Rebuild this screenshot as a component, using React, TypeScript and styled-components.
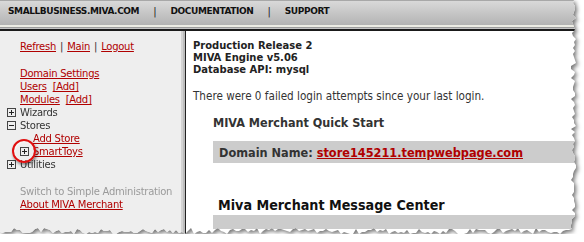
import React from "react";
import styled, { createGlobalStyle } from "styled-components";

const GlobalStyle = createGlobalStyle`
  html, body {
    margin: 0;
    padding: 0;
    background: #ffffff;
  }
`;

const SHOT_W = 576;
const SHOT_H = 234;

// torn paper edge, generated once with a fixed seed so it stays the same
const tornEdge = (() => {
  let seed = 7;
  const rnd = () => {
    seed = (seed * 9301 + 49297) % 233280;
    return seed / 233280;
  };
  const pts: string[] = ["0px 0px"];
  for (let y = 0; y <= SHOT_H - 6; y += 3) {
    pts.push(`${SHOT_W - Math.round(rnd() * 5)}px ${y}px`);
  }
  for (let x = SHOT_W - 4; x >= 0; x -= 3) {
    pts.push(`${x}px ${SHOT_H - Math.round(rnd() * 6)}px`);
  }
  pts.push(`0px ${SHOT_H - 3}px`);
  return `polygon(${pts.join(", ")})`;
})();

const Shadow = styled.div`
  position: relative;
  width: ${SHOT_W}px;
  height: ${SHOT_H}px;
  filter: drop-shadow(2px 2px 2px rgba(0, 0, 0, 0.55));
`;

const Frame = styled.div`
  width: 100%;
  height: 100%;
  background: #ffffff;
  display: flex;
  flex-direction: column;
  clip-path: ${tornEdge};
`;

const TopNav = styled.div`
  height: 25px;
  display: flex;
  align-items: flex-start;
  padding: 4px 0 0 8px;
  box-sizing: border-box;
  background: linear-gradient(#d9d9d9, #b3b3b3);
  border-top: 1px solid #a8a8a8;
`;

const NavItem = styled.span`
  font-family: "DejaVu Sans", Verdana, sans-serif;
  font-weight: bold;
  font-size: 9px;
  letter-spacing: -0.4px;
  line-height: 13px;
  color: #111;
`;

const NavSep = styled.span`
  font-family: "DejaVu Sans", Verdana, sans-serif;
  font-size: 10px;
  line-height: 13px;
  color: #222;
  margin: 0 14px;
`;

const NavRule = styled.div`
  height: 6px;
  background: linear-gradient(
    #ecece4 0px,
    #ecece4 2px,
    #9c9c9c 2px,
    #9c9c9c 3px,
    #c4c4c4 3px,
    #c4c4c4 4px,
    #1a1a1a 4px,
    #1a1a1a 6px
  );
`;

const Body = styled.div`
  flex: 1;
  display: flex;
  min-height: 0;
`;

const Sidebar = styled.div`
  position: relative;
  width: 181px;
  background: #eeeeee;
  padding: 9px 0 0 7px;
  box-sizing: border-box;
  font-family: "DejaVu Sans", Verdana, sans-serif;
  font-size: 10px;
  letter-spacing: -0.25px;
  line-height: 13px;
  color: #333;
`;

const Divider = styled.div`
  width: 4px;
  background: linear-gradient(90deg, #d4d4d4 0, #d4d4d4 2px, #bdbdbd 2px);
  border-right: 1px solid #222;
`;

const Row = styled.div<{ $level?: number; $gap?: number; $muted?: boolean }>`
  display: flex;
  align-items: center;
  height: 13px;
  padding-left: ${(p) => (p.$level || 0) * 13}px;
  margin-bottom: ${(p) => p.$gap || 0}px;
  color: ${(p) => (p.$muted ? "#9a9a9a" : "#333")};
  white-space: nowrap;
`;

const IconSlot = styled.span`
  width: 13px;
  flex: none;
  display: flex;
  align-items: center;
`;

const Link = styled.a`
  color: #b00000;
  text-decoration: underline;
  cursor: pointer;
`;

const Pipe = styled.span`
  margin: 0 4px;
  color: #333;
`;

const Toggle = ({ open }: { open?: boolean }) => (
  <svg width="9" height="9" viewBox="0 0 9 9">
    <rect x="0.5" y="0.5" width="8" height="8" fill="none" stroke="#444" />
    <line x1="2" y1="4.5" x2="7" y2="4.5" stroke="#222" />
    {!open && <line x1="4.5" y1="2" x2="4.5" y2="7" stroke="#222" />}
  </svg>
);

const Ring = styled.div`
  position: absolute;
  left: 12px;
  top: 108px;
  width: 20px;
  height: 20px;
  border: 2px solid #e01010;
  border-radius: 50%;
  box-shadow: 1px 2px 3px rgba(0, 0, 0, 0.45), inset 1px 1px 2px rgba(255, 255, 255, 0.7);
`;

const Content = styled.div`
  flex: 1;
  padding: 9px 0 0 7px;
  font-family: Tahoma, "DejaVu Sans Condensed", "DejaVu Sans", sans-serif;
  color: #222;
`;

const Info = styled.div`
  font-size: 11.1px;
  font-weight: bold;
  line-height: 12px;
  margin-bottom: 14px;
`;

const Notice = styled.div`
  font-size: 11.6px;
  line-height: 12px;
  color: #333;
  margin-bottom: 12px;
`;

const Section = styled.div`
  margin-left: 20px;
`;

const SectionTitle = styled.div<{ $size: number; $indent?: number }>`
  font-size: ${(p) => p.$size}px;
  font-weight: bold;
  line-height: 18px;
  padding-left: ${(p) => p.$indent || 0}px;
  color: ${(p) => (p.$size > 13 ? "#111" : "#333")};
`;

const Spacer = styled.div<{ $h: number }>`
  height: ${(p) => p.$h}px;
`;

const GreyBar = styled.div<{ $height: number }>`
  background: #cccccc;
  height: ${(p) => p.$height}px;
  display: flex;
  align-items: center;
  padding-left: 6px;
  font-size: 12.6px;
  font-weight: bold;
  color: #333;
  white-space: nowrap;
`;

const DomainLink = styled(Link)`
  margin-left: 4px;
`;

export default function App() {
  return (
    <>
      <GlobalStyle />
      <Shadow>
        <Frame>
          <TopNav>
            <NavItem>SMALLBUSINESS.MIVA.COM</NavItem>
            <NavSep>|</NavSep>
            <NavItem>DOCUMENTATION</NavItem>
            <NavSep>|</NavSep>
            <NavItem>SUPPORT</NavItem>
          </TopNav>
          <NavRule />
          <Body>
            <Sidebar>
              <Row $gap={14}>
                <IconSlot />
                <Link>Refresh</Link>
                <Pipe>|</Pipe>
                <Link>Main</Link>
                <Pipe>|</Pipe>
                <Link>Logout</Link>
              </Row>
              <Row>
                <IconSlot />
                <Link>Domain Settings</Link>
              </Row>
              <Row>
                <IconSlot />
                <Link>Users</Link>&nbsp;&nbsp;<Link>[Add]</Link>
              </Row>
              <Row>
                <IconSlot />
                <Link>Modules</Link>&nbsp;&nbsp;<Link>[Add]</Link>
              </Row>
              <Row>
                <IconSlot>
                  <Toggle />
                </IconSlot>
                Wizards
              </Row>
              <Row>
                <IconSlot>
                  <Toggle open />
                </IconSlot>
                Stores
              </Row>
              <Row $level={1}>
                <IconSlot />
                <Link>Add Store</Link>
              </Row>
              <Row $level={1}>
                <IconSlot>
                  <Toggle />
                </IconSlot>
                <Link>SmartToys</Link>
              </Row>
              <Row $gap={14}>
                <IconSlot>
                  <Toggle />
                </IconSlot>
                Utilities
              </Row>
              <Row $muted>
                <IconSlot />
                Switch to Simple Administration
              </Row>
              <Row>
                <IconSlot />
                <Link>About MIVA Merchant</Link>
              </Row>
              <Ring />
            </Sidebar>
            <Divider />
            <Content>
              <Info>
                Production Release 2
                <br />
                MIVA Engine v5.06
                <br />
                Database API: mysql
              </Info>
              <Notice>There were 0 failed login attempts since your last login.</Notice>
              <Section>
                <SectionTitle $size={12.5}>MIVA Merchant Quick Start</SectionTitle>
                <Spacer $h={9} />
                <GreyBar $height={22}>
                  Domain Name:
                  <DomainLink>store145211.tempwebpage.com</DomainLink>
                </GreyBar>
                <Spacer $h={33} />
                <SectionTitle $size={14.2} $indent={5}>
                  Miva Merchant Message Center
                </SectionTitle>
                <Spacer $h={1} />
                <GreyBar $height={14} />
              </Section>
            </Content>
          </Body>
        </Frame>
      </Shadow>
    </>
  );
}
